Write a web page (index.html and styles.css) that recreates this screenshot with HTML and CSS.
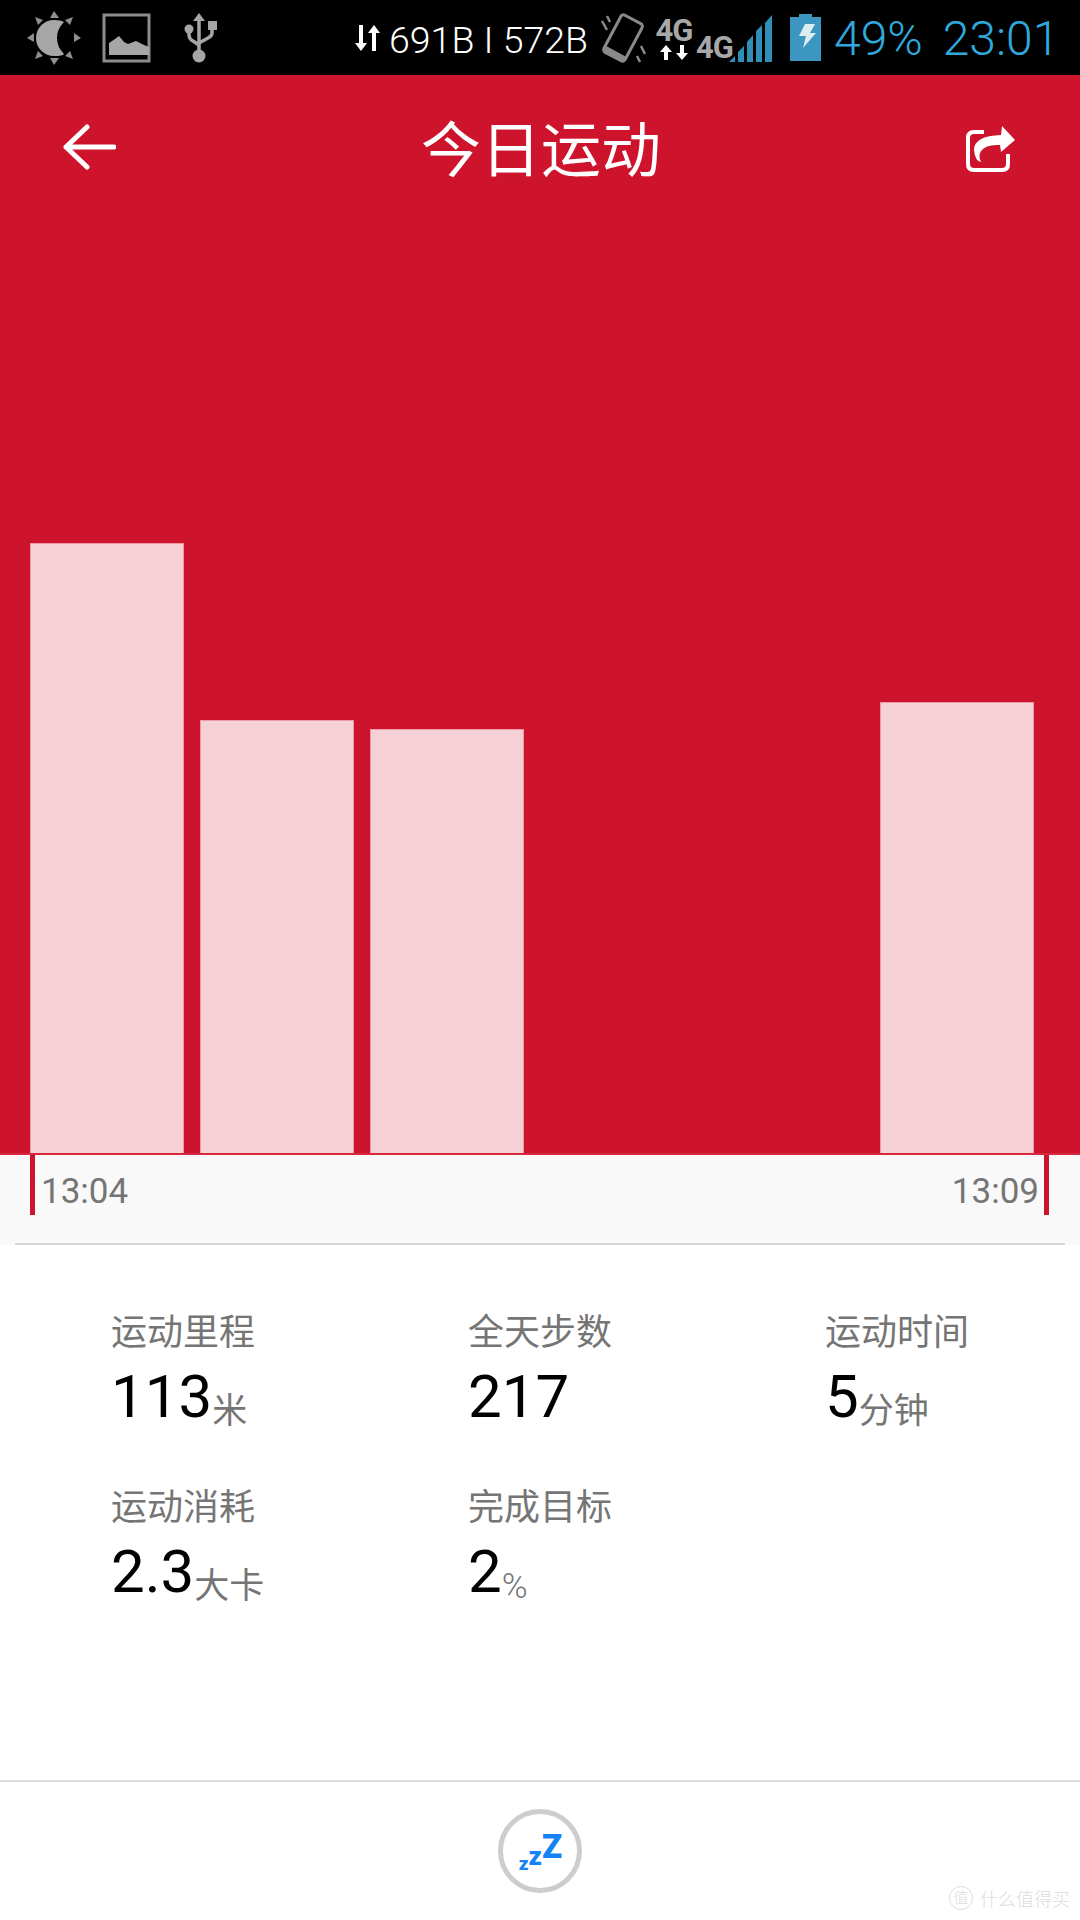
FILE: index.html
```html
<!doctype html>
<html lang="zh-CN">

<head>
    <title>今日运动</title>
    <meta charset="UTF-8" />
    <meta name="viewport" content="width=device-width, initial-scale=1" />
    <link rel="stylesheet" href="styles.css">
</head>

<body>
    <div class="page">
        <div class="statusbar">
            <svg class="ic-sun" width="54" height="54" viewBox="0 0 54 54">
                <path fill="#a6a6a6" d="M27 9 A18 18 0 0 0 27 45 Q36 45 37 43 Q30 36 30 27 Q30 18 37 11 Q34 9 27 9Z" />
                <path fill="#8f8f8f" d="M27 0l5 7h-9zM27 54l5-7h-9zM0 27l7-5v9zM54 27l-7-5v9zM8 6l8 3-5 5zM46 6l-8 3 5 5zM8 48l8-3-5-5zM46 48l-8-3 5-5z" />
            </svg>
            <svg class="ic-img" width="49" height="50" viewBox="0 0 49 50">
                <rect x="2" y="2" width="45" height="46" fill="none" stroke="#8c8c8c" stroke-width="3" />
                <path fill="#a6a6a6" d="M7 42V30l6-4 4-3 5 6 4 2 8-3 8 4 5 2v8z" />
            </svg>
            <svg class="ic-usb" width="33" height="50" viewBox="0 0 33 50">
                <path fill="none" stroke="#a6a6a6" stroke-width="3.5" d="M15 6v36M5 17v5q0 4 4 6l6 4M28 13v7q0 3-4 5l-9 5" />
                <path fill="#a6a6a6" d="M15 0l6 8h-12zM24 8h9v9h-9z" />
                <circle cx="5" cy="16" r="4.5" fill="#a6a6a6" />
                <circle cx="15" cy="43" r="6.5" fill="#a6a6a6" />
            </svg>
            <svg class="ic-arrows" width="26" height="26" viewBox="0 0 26 26">
                <path fill="#fff" d="M5 0h4v18h4l-6 8-6-8h4zM18 26h4V8h4l-6-8-6 8h4z" />
            </svg>
            <span class="speed">691B I 572B</span>
            <svg class="ic-rotate" width="46" height="52" viewBox="0 0 46 52">
                <g transform="rotate(28 23 26)">
                    <rect x="11" y="5" width="24" height="42" rx="3" fill="none" stroke="#8a8a8a" stroke-width="3" />
                    <rect x="11" y="41" width="24" height="6" fill="#8a8a8a" />
                </g>
                <path fill="none" stroke="#8a8a8a" stroke-width="2.5" d="M2 9l5 9M7 4l3 6M37 44l3 6M41 34l4 8" />
            </svg>
            <div class="net-a">
                <span class="net-label">4G</span>
                <svg width="30" height="15" viewBox="0 0 30 15">
                    <path fill="#fff" d="M5 15h4V7h4L7 0 1 7h4zM21 0h4v8h4l-6 7-6-7h4z" />
                </svg>
            </div>
            <span class="net-label net-b">4G</span>
            <svg class="ic-signal" width="44" height="47" viewBox="0 0 44 47">
                <path fill="#2f8fb8" d="M0 47l6-6v6zM9 47V37l6-6v16zM18 47V27l6-7v27zM27 47V16l6-6v37zM36 47V8l7-8v47z" />
            </svg>
            <svg class="ic-batt" width="31" height="47" viewBox="0 0 31 47">
                <path fill="#3c97c0" d="M9 0h13v3h9v44H0V3h9z" />
                <path fill="#dcecf3" d="M15 10h10l-5 9h6l-13 15 3-12H9z" />
            </svg>
            <span class="batt-pct">49%</span>
            <span class="clock">23:01</span>
        </div>

        <div class="hero">
            <div class="toolbar">
                <svg class="ic-back" width="54" height="46" viewBox="0 0 54 46">
                    <path fill="none" stroke="#fff" stroke-width="5" stroke-linecap="round" stroke-linejoin="round" d="M25 3L4 23l21 20M4 23h48" />
                </svg>
                <h1>今日运动</h1>
                <svg class="ic-share" width="50" height="46" viewBox="0 0 50 46">
                    <path fill="none" stroke="#fff" stroke-width="4" d="M18 6H8Q2 6 2 12v26q0 6 6 6h28q6 0 6-6V28" />
                    <path fill="#fff" d="M36 0l13 14-14 12-1-7q-14-1-19 6-3 5 0 11-6-1-7-12 0-14 27-15z" />
                </svg>
            </div>
            <div class="bars">
                <div class="bar" style="height: 610px"></div>
                <div class="bar" style="height: 433px"></div>
                <div class="bar" style="height: 424px"></div>
                <div class="bar bar-empty"></div>
                <div class="bar bar-empty"></div>
                <div class="bar" style="height: 451px"></div>
            </div>
        </div>

        <div class="axis">
            <div class="ticks">
                <span class="tick">13:04</span>
                <span class="tick tick-end">13:09</span>
            </div>
            <div class="axis-line"></div>
        </div>

        <div class="stats">
            <div class="stat">
                <div class="stat-label">运动里程</div>
                <div class="stat-value">113<span class="unit">米</span></div>
            </div>
            <div class="stat">
                <div class="stat-label">全天步数</div>
                <div class="stat-value">217</div>
            </div>
            <div class="stat">
                <div class="stat-label">运动时间</div>
                <div class="stat-value">5<span class="unit">分钟</span></div>
            </div>
            <div class="stat">
                <div class="stat-label">运动消耗</div>
                <div class="stat-value">2.3<span class="unit">大卡</span></div>
            </div>
            <div class="stat">
                <div class="stat-label">完成目标</div>
                <div class="stat-value">2<span class="unit unit-pct">%</span></div>
            </div>
        </div>

        <div class="footer">
            <div class="sleep-btn">
                <span class="z z1">z</span><span class="z z2">z</span><span class="z z3">Z</span>
            </div>
        </div>
    </div>

    <div class="watermark">
        <span class="wm-badge">值</span>
        <span>什么值得买</span>
    </div>
</body>

</html>
```

FILE: styles.css
```css
* {
    box-sizing: border-box;
}

body {
    margin: 0;
    padding: 0;
    width: 1080px;
    height: 1920px;
    overflow: hidden;
    background: #fff;
    font-family: Roboto, "Noto Sans CJK SC", sans-serif;
    position: relative;
}

.page {
    display: flex;
    flex-direction: column;
    height: 1920px;
}

/* status bar */
.statusbar {
    display: flex;
    align-items: center;
    height: 75px;
    background: #000;
    padding-left: 27px;
    flex-shrink: 0;
}

.ic-img {
    margin-left: 21px;
}

.ic-usb {
    margin-left: 33px;
}

.ic-arrows {
    margin-left: 137px;
}

.speed {
    margin: 4px 0 0 9px;
    width: 201px;
    color: #fff;
    font-size: 37.5px;
    font-weight: 300;
    white-space: nowrap;
}

.ic-rotate {
    margin-left: 10px;
}

.net-a {
    display: flex;
    flex-direction: column;
    align-items: center;
    margin-left: 10px;
    width: 36px;
}

.net-label {
    color: #a8a8a8;
    font-size: 31px;
    font-weight: 700;
    line-height: 29px;
    letter-spacing: -1px;
}

.net-b {
    margin: 20px 0 0 4px;
    width: 35px;
}

.ic-signal {
    margin: 2px 0 0 -2px;
}

.ic-batt {
    margin-left: 17px;
}

.batt-pct,
.clock {
    margin-top: 2px;
    color: #2fa9dc;
    font-size: 48px;
    font-weight: 300;
    white-space: nowrap;
}

.batt-pct {
    margin-left: 13px;
}

.clock {
    margin-left: 20px;
}

/* red chart area */
.hero {
    background: #cd142c;
    height: 1080px;
    display: flex;
    flex-direction: column;
    justify-content: space-between;
    border-bottom: 2px solid #d8283f;
    flex-shrink: 0;
}

.toolbar {
    display: flex;
    align-items: center;
    justify-content: space-between;
    padding: 44px 64px 0 62px;
}

.toolbar h1 {
    margin: 0;
    color: #fff;
    font-size: 60px;
    font-weight: 400;
    line-height: 66px;
}

.ic-back {
    margin-bottom: 10px;
}

.ic-share {
    margin-bottom: 6px;
}

.bars {
    display: flex;
    align-items: flex-end;
    gap: 16.5px;
    padding-left: 30px;
}

.bar {
    width: 153.5px;
    background: #f5d0d5;
    border: 1px solid #ee9aa6;
    border-bottom: 0;
}

.bar-empty {
    height: 0;
    border: 0;
}

/* time axis */
.axis {
    background: #f9f9f9;
    height: 90px;
    display: flex;
    flex-direction: column;
    justify-content: space-between;
    flex-shrink: 0;
}

.ticks {
    display: flex;
    justify-content: space-between;
    padding: 0 31px 0 30px;
}

.tick {
    height: 60px;
    padding: 17px 0 0 6px;
    border-left: 5px solid #cd142c;
    color: #757575;
    font-size: 35px;
    line-height: 40px;
}

.tick-end {
    padding: 17px 5px 0 0;
    border-left: 0;
    border-right: 5px solid #cd142c;
}

.axis-line {
    height: 2px;
    margin: 0 15px;
    background: #d6d6d6;
}

/* numbers */
.stats {
    flex: 1;
    display: grid;
    grid-template-columns: 357px 357px 1fr;
    grid-auto-rows: 124px;
    row-gap: 51px;
    padding: 66px 0 0 111px;
}

.stat-label {
    color: #757575;
    font-size: 36px;
    line-height: 44px;
}

.stat-value {
    margin-top: 7px;
    height: 70px;
    color: #000;
    font-size: 60px;
    line-height: 70px;
    white-space: nowrap;
}

.unit {
    color: #757575;
    font-size: 35px;
    line-height: 1;
    vertical-align: -6px;
}

.unit-pct {
    font-weight: 300;
}

/* bottom button */
.footer {
    height: 140px;
    border-top: 2px solid #ddd;
    display: flex;
    align-items: center;
    justify-content: center;
    flex-shrink: 0;
}

.sleep-btn {
    width: 84px;
    height: 84px;
    border: 5px solid #cdcdcd;
    border-radius: 50%;
    display: flex;
    align-items: flex-end;
    justify-content: center;
    padding: 0 0 15px 1px;
    color: #1583f5;
    font-weight: 900;
    line-height: 1;
}

.z1 {
    font-size: 19px;
}

.z2 {
    font-size: 26px;
    margin-bottom: 4px;
}

.z3 {
    font-size: 33px;
    margin-bottom: 10px;
}

/* site mark in the corner */
.watermark {
    position: absolute;
    right: 10px;
    bottom: 9px;
    display: flex;
    align-items: center;
    gap: 7px;
    color: #dcdcdc;
    font-size: 18px;
    font-weight: 300;
}

.wm-badge {
    width: 24px;
    height: 24px;
    border: 1px solid #dcdcdc;
    border-radius: 50%;
    font-size: 15px;
    line-height: 22px;
    text-align: center;
}
```
